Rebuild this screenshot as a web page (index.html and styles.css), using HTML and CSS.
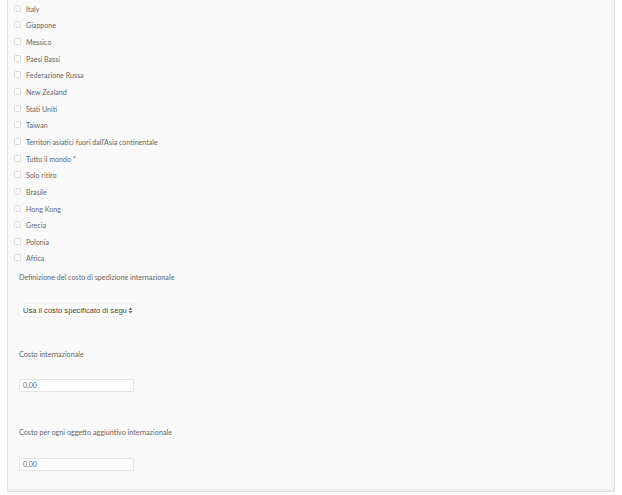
FILE: index.html
```html
<!DOCTYPE html>
<html lang="it">
<head>
    <meta charset="UTF-8">
    <meta name="viewport" content="width=device-width, initial-scale=1.0">
    <title>Spedizione internazionale</title>
    <link rel="stylesheet" href="styles.css">
</head>
<body>
<div class="panel">
    <ul class="country-list">
        <li><span class="check"></span>Italy</li>
        <li><span class="check"></span>Giappone</li>
        <li><span class="check"></span>Messico</li>
        <li><span class="check"></span>Paesi Bassi</li>
        <li><span class="check"></span>Federazione Russa</li>
        <li><span class="check"></span>New Zealand</li>
        <li><span class="check"></span>Stati Uniti</li>
        <li><span class="check"></span>Taiwan</li>
        <li><span class="check"></span>Territori asiatici fuori dall'Asia continentale</li>
        <li><span class="check"></span>Tutto il mondo *</li>
        <li><span class="check"></span>Solo ritiro</li>
        <li><span class="check"></span>Brasile</li>
        <li><span class="check"></span>Hong Kong</li>
        <li><span class="check"></span>Grecia</li>
        <li><span class="check"></span>Polonia</li>
        <li><span class="check"></span>Africa</li>
    </ul>

    <div class="field first">
        <div class="field-label">Definizione del costo di spedizione internazionale</div>
        <div class="select-box">
            <span>Usa il costo specificato di segu</span>
            <svg class="arrows" width="5" height="7" viewBox="0 0 5 7">
                <path d="M0.5 3 L2.5 0.5 L4.5 3 Z M0.5 4 L2.5 6.5 L4.5 4 Z" fill="#666"/>
            </svg>
        </div>
    </div>

    <div class="field">
        <div class="field-label">Costo internazionale</div>
        <div class="text-input">0,00</div>
    </div>

    <div class="field last">
        <div class="field-label">Costo per ogni oggetto aggiuntivo internazionale</div>
        <div class="text-input">0,00</div>
    </div>
</div>
</body>
</html>
```

FILE: styles.css
```css
        * {
            margin: 0;
            padding: 0;
            box-sizing: border-box;
        }

        body {
            background: #fff;
            font-family: 'Lato', 'Open Sans', sans-serif;
            color: #666;
        }

        .panel {
            margin-left: 7px;
            width: 608px;
            height: 492px;
            background: #fafafa;
            border: 1px solid #e2e2e2;
            border-top: none;
            box-shadow: inset -2px -2px 0 #f0f0f0;
        }

        .country-list {
            list-style: none;
            padding: 1px 0 0 6px;
        }

        .country-list li {
            display: flex;
            align-items: center;
            height: 16.65px;
            font-size: 7.1px;
        }

        .check {
            width: 7px;
            height: 7px;
            margin-right: 5px;
            margin-top: -2px;
            background: #fff;
            border: 1px solid #d9d9d9;
            border-radius: 1.5px;
        }

        .field {
            padding-left: 11px;
            margin-top: 34px;
        }

        .field.first {
            margin-top: 6px;
        }

        .field.last {
            margin-top: 36px;
        }

        .field-label {
            font-size: 7.2px;
            height: 10px;
            line-height: 10px;
        }

        .select-box {
            display: flex;
            align-items: center;
            justify-content: space-between;
            width: 118px;
            height: 12px;
            margin-top: 21px;
            padding: 0 4px 0 4px;
            background: #fff;
            border-radius: 2px;
            box-shadow: 0 0 1px rgba(0, 0, 0, 0.25);
            font-family: 'Liberation Sans', sans-serif;
            font-size: 7.6px;
            color: #444;
        }

        .text-input {
            width: 115px;
            height: 13px;
            margin-top: 19px;
            padding-left: 3px;
            line-height: 11px;
            background: #fff;
            border: 1px solid #e4e4e4;
            font-size: 7.1px;
        }

        .field.last .text-input {
            margin-top: 20px;
        }
```
